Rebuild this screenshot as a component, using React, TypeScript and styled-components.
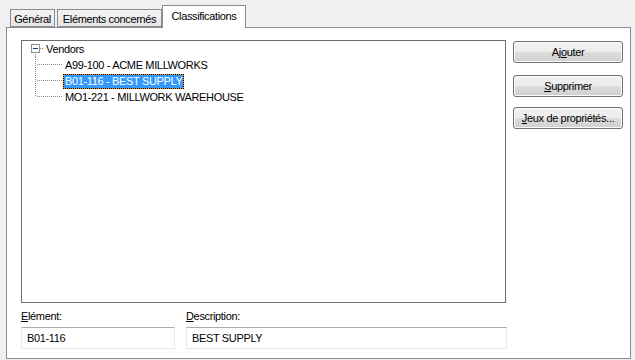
import React from "react";
import styled, { createGlobalStyle } from "styled-components";

const GlobalStyle = createGlobalStyle`
  html, body {
    margin: 0;
    padding: 0;
    background: #f0f0f0;
  }
  body {
    font-family: "Liberation Sans", Arial, sans-serif;
    font-size: 11px;
    letter-spacing: -0.35px;
    color: #000;
  }
`;

const Window = styled.div`
  width: 635px;
  height: 360px;
  box-sizing: border-box;
  padding: 5px 0 0 6px;
  background: #f0f0f0;
  overflow: hidden;
`;

const TabStrip = styled.div`
  display: flex;
  align-items: flex-end;
  height: 22px;
  padding-left: 4px;
`;

const Tab = styled.div<{ $active?: boolean; $width: number; $gap?: number }>`
  box-sizing: border-box;
  width: ${({ $width }) => $width}px;
  margin-left: ${({ $gap }) => $gap ?? 0}px;
  height: ${({ $active }) => ($active ? 23 : 18)}px;
  margin-bottom: ${({ $active }) => ($active ? -1 : 0)}px;
  border: 1px solid #898c95;
  border-bottom: ${({ $active }) => ($active ? "none" : "1px solid #898c95")};
  background: ${({ $active }) =>
    $active ? "#fff" : "linear-gradient(#f3f3f3, #e6e6e6)"};
  position: relative;
  z-index: ${({ $active }) => ($active ? 1 : 0)};
  display: flex;
  justify-content: center;
  padding-top: ${({ $active }) => ($active ? 4 : 3)}px;
  line-height: 13px;
  white-space: nowrap;
`;

const Panel = styled.div`
  box-sizing: border-box;
  width: 625px;
  height: 332px;
  border: 1px solid #898c95;
  background: #fff;
  padding: 12px 0 0 14px;
  display: flex;
  flex-direction: column;
`;

const TopRow = styled.div`
  display: flex;
  align-items: flex-start;
`;

const Tree = styled.div`
  box-sizing: border-box;
  width: 485px;
  height: 263px;
  border: 1px solid #6d6d6d;
  background: #fff;
`;

const TreeRow = styled.div<{ $indent: number }>`
  display: flex;
  align-items: center;
  height: 16px;
  padding-left: ${({ $indent }) => $indent}px;
  svg {
    display: block;
    flex: none;
  }
`;

const NodeLabel = styled.span<{ $selected?: boolean }>`
  box-sizing: border-box;
  height: 15px;
  line-height: 13px;
  padding: 0 1px;
  border: 1px ${({ $selected }) => ($selected ? "dotted #000" : "solid transparent")};
  background: ${({ $selected }) => ($selected ? "#e8901c" : "transparent")};
  box-shadow: ${({ $selected }) => ($selected ? "inset 0 0 0 40px #3399ff" : "none")};
  color: ${({ $selected }) => ($selected ? "#fff" : "#000")};
  white-space: nowrap;
`;

const ButtonColumn = styled.div`
  display: flex;
  flex-direction: column;
  margin-left: 7px;
  margin-top: 1px;
`;

const Button = styled.button<{ $space?: number }>`
  box-sizing: border-box;
  width: 110px;
  height: 22px;
  margin-top: ${({ $space }) => $space ?? 0}px;
  border: 1px solid #707070;
  border-radius: 3px;
  background: linear-gradient(#f2f2f2 0%, #ebebeb 50%, #dddddd 51%, #cfcfcf 100%);
  box-shadow: inset 0 0 0 1px #fcfcfc;
  font-family: "Liberation Sans", Arial, sans-serif;
  font-size: 11px;
  letter-spacing: -0.35px;
  color: #000;
  padding: 0;
  line-height: 13px;
  white-space: nowrap;
`;

const Mnemonic = styled.span`
  text-decoration: underline;
`;

const FieldRow = styled.div`
  display: flex;
  gap: 11px;
  margin-top: 7px;
`;

const Field = styled.div<{ $width: number }>`
  display: flex;
  flex-direction: column;
  width: ${({ $width }) => $width}px;
`;

const FieldLabel = styled.label`
  line-height: 13px;
  height: 13px;
  margin-bottom: 4px;
`;

const TextBox = styled.div`
  box-sizing: border-box;
  height: 22px;
  border: 1px solid #e3e9ef;
  border-top-color: #abadb3;
  background: #fff;
  padding-left: 5px;
  display: flex;
  align-items: center;
  white-space: nowrap;
`;

const ExpanderIcon = () => (
  <svg width="13" height="16" viewBox="0 0 13 16">
    <rect x="0.5" y="3.5" width="8" height="8" fill="#fff" stroke="#8f8f8f" />
    <line x1="2" y1="7.5" x2="7" y2="7.5" stroke="#1e3287" />
    <line x1="9" y1="7.5" x2="13" y2="7.5" stroke="#8a8a8a" strokeDasharray="1 1" />
    <line x1="4.5" y1="13" x2="4.5" y2="16" stroke="#8a8a8a" strokeDasharray="1 1" />
  </svg>
);

const Connector = ({ last }: { last?: boolean }) => (
  <svg width="41" height="16" viewBox="0 0 41 16">
    <line x1="13.5" y1="0" x2="13.5" y2={last ? 8 : 16} stroke="#8a8a8a" strokeDasharray="1 1" />
    <line x1="15" y1="7.5" x2="41" y2="7.5" stroke="#8a8a8a" strokeDasharray="1 1" />
  </svg>
);

const vendors = [
  { code: "A99-100", name: "ACME MILLWORKS" },
  { code: "B01-116", name: "BEST SUPPLY", selected: true },
  { code: "MO1-221", name: "MILLWORK WAREHOUSE" },
];

export default function App() {
  return (
    <>
      <GlobalStyle />
      <Window>
        <TabStrip>
          <Tab $width={45}>Général</Tab>
          <Tab $width={105} $gap={2}>Eléments concernés</Tab>
          <Tab $width={84} $active>
            Classifications
          </Tab>
        </TabStrip>
        <Panel>
          <TopRow>
            <Tree>
              <TreeRow $indent={9}>
                <ExpanderIcon />
                <NodeLabel>Vendors</NodeLabel>
              </TreeRow>
              {vendors.map((v, i) => (
                <TreeRow key={v.code} $indent={0}>
                  <Connector last={i === vendors.length - 1} />
                  <NodeLabel $selected={v.selected}>
                    {v.code} - {v.name}
                  </NodeLabel>
                </TreeRow>
              ))}
            </Tree>
            <ButtonColumn>
              <Button>
                Aj<Mnemonic>o</Mnemonic>uter
              </Button>
              <Button $space={12}>
                <Mnemonic>S</Mnemonic>upprimer
              </Button>
              <Button $space={10}>
                <Mnemonic>J</Mnemonic>eux de propriétés...
              </Button>
            </ButtonColumn>
          </TopRow>
          <FieldRow>
            <Field $width={154}>
              <FieldLabel>
                <Mnemonic>E</Mnemonic>lément:
              </FieldLabel>
              <TextBox>B01-116</TextBox>
            </Field>
            <Field $width={321}>
              <FieldLabel>
                <Mnemonic>D</Mnemonic>escription:
              </FieldLabel>
              <TextBox>BEST SUPPLY</TextBox>
            </Field>
          </FieldRow>
        </Panel>
      </Window>
    </>
  );
}
